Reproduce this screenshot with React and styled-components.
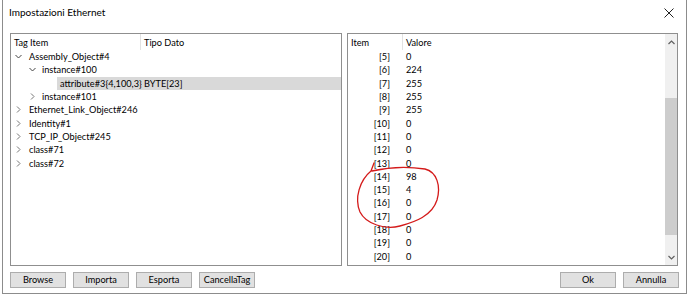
import React from 'react'
import styled, { createGlobalStyle } from 'styled-components';

const GlobalStyle = createGlobalStyle`
  body {
    margin: 0;
    background: #ffffff;
    font-family: Lato, "Open Sans", sans-serif;
    color: #000;
  }
`

const tree = [
  { name: 'Assembly_Object#4', level: 0, open: true },
  { name: 'instance#100', level: 1, open: true },
  { name: 'attribute#3{4,100,3}', level: 2, type: 'BYTE[23]', selected: true },
  { name: 'instance#101', level: 1, open: false },
  { name: 'Ethernet_Link_Object#246', level: 0, open: false },
  { name: 'Identity#1', level: 0, open: false },
  { name: 'TCP_IP_Object#245', level: 0, open: false },
  { name: 'class#71', level: 0, open: false },
  { name: 'class#72', level: 0, open: false },
];

const values = [0, 224, 255, 255, 255, 0, 0, 0, 0, 98, 4, 0, 0, 0, 0, 0, 0];

const Chevron = ({ open }) => (
  <svg width="7" height="7" viewBox="0 0 7 7">
    {open
      ? <polyline points="0.5,2 3.5,5 6.5,2" fill="none" stroke="#444" strokeWidth="1" />
      : <polyline points="2,0.5 5,3.5 2,6.5" fill="none" stroke="#777" strokeWidth="1" />}
  </svg>
);

export default function App() {
  return (
    <>
      <GlobalStyle />
      <Window>
        <TitleBar>
          <Title>Impostazioni Ethernet</Title>
          <Close>
            <svg width="10" height="10" viewBox="0 0 10 10">
              <path d="M0.5 0.5 L9.5 9.5 M9.5 0.5 L0.5 9.5" stroke="#222" strokeWidth="1" />
            </svg>
          </Close>
        </TitleBar>
        <Body>
          <Panels>
            <Panel $width={332}>
              <Header>
                <HeadCell $width={130}>Tag Item</HeadCell>
                <HeadCell>Tipo Dato</HeadCell>
              </Header>
              {tree.map((node) => (
                <TreeRow key={node.name} $level={node.level}>
                  <Toggle $level={node.level}>
                    {node.level < 2 && <Chevron open={node.open} />}
                  </Toggle>
                  <NodeLabel $selected={node.selected} $level={node.level}>
                    <NameText $level={node.level}>{node.name}</NameText>
                    {node.type && <TypeText>{node.type}</TypeText>}
                  </NodeLabel>
                </TreeRow>
              ))}
            </Panel>
            <Panel $width={331}>
              <Header>
                <HeadCell $width={55}>Item</HeadCell>
                <HeadCell>Valore</HeadCell>
              </Header>
              <List>
                {values.map((v, i) => (
                  <ValueRow key={i}>
                    <IndexCell>[{i + 5}]</IndexCell>
                    <ValueCell>{v}</ValueCell>
                  </ValueRow>
                ))}
              </List>
              <ScrollBar>
                <Arrow>
                  <svg width="7" height="5" viewBox="0 0 7 5">
                    <polyline points="0.5,4 3.5,1 6.5,4" fill="none" stroke="#606060" strokeWidth="1.2" />
                  </svg>
                </Arrow>
                <Track>
                  <Thumb />
                </Track>
                <Arrow>
                  <svg width="7" height="5" viewBox="0 0 7 5">
                    <polyline points="0.5,1 3.5,4 6.5,1" fill="none" stroke="#606060" strokeWidth="1.2" />
                  </svg>
                </Arrow>
              </ScrollBar>
              <Mark width="120" height="120" viewBox="0 0 120 120">
                <path
                  d="M27 128 L24 136 C13 145, 7 163, 13 177 C19 189, 38 195, 53 191 C68 187, 85 181, 90 165 C94 151, 90 137, 78 134 C58 131, 38 133, 25 136"
                  transform="translate(-1 -99)"
                  fill="none"
                  stroke="#d41a1a"
                  strokeWidth="1.3"
                  strokeLinecap="round"
                />
              </Mark>
            </Panel>
          </Panels>
          <Footer>
            <ButtonGroup>
              <Button>Browse</Button>
              <Button>Importa</Button>
              <Button>Esporta</Button>
              <Button>CancellaTag</Button>
            </ButtonGroup>
            <ButtonGroup>
              <Button>Ok</Button>
              <Button>Annulla</Button>
            </ButtonGroup>
          </Footer>
        </Body>
      </Window>
    </>
  )
}

const Window = styled.div`
  margin-left: 2px;
  width: 683px;
  height: 293px;
  border: 1px solid #8c8c8c;
  border-top: none;
  background: #ffffff;
  display: flex;
  flex-direction: column;
`

const TitleBar = styled.div`
  height: 27px;
  display: flex;
  align-items: center;
  justify-content: space-between;
  padding: 0 12px 0 6px;
`

const Title = styled.div`
  font-size: 10px;
  margin-top: -3px;
`

const Close = styled.div`
  display: flex;
  margin-top: -2px;
`

const Body = styled.div`
  padding: 6px 7px 0 7px;
  display: flex;
  flex-direction: column;
`

const Panels = styled.div`
  display: flex;
  gap: 5px;
`

const Panel = styled.div`
  position: relative;
  width: ${p => p.$width}px;
  height: 233px;
  box-sizing: border-box;
  border: 1px solid #8f8f8f;
  background: #fff;
  overflow: hidden;
`

const Header = styled.div`
  height: 16px;
  display: flex;
  font-size: 9.2px;
`

const HeadCell = styled.div`
  width: ${p => (p.$width ? `${p.$width}px` : 'auto')};
  box-sizing: border-box;
  padding: 1px 3px 0 3px;
  line-height: 15px;
  border-right: ${p => (p.$width ? '1px solid #e2e2e2' : 'none')};
`

const TreeRow = styled.div`
  height: 13.3px;
  display: flex;
  align-items: center;
  font-size: 9.2px;
  padding-left: ${p => 3 + p.$level * 13}px;
`

const Toggle = styled.div`
  width: 15px;
  display: flex;
  justify-content: flex-start;
  padding-left: ${p => (p.$level === 1 ? 2 : 1)}px;
  box-sizing: border-box;
`

const NodeLabel = styled.div`
  flex: 1;
  display: flex;
  height: 100%;
  align-items: center;
  margin-left: ${p => (p.$level === 2 ? 2 : 0)}px;
  padding-left: ${p => (p.$level === 2 ? 3 : 0)}px;
  background: ${p => (p.$selected ? '#d9d9d9' : 'transparent')};
`

const NameText = styled.span`
  white-space: nowrap;
  flex-shrink: 0;
  width: ${p => (p.$level === 2 ? '84px' : 'auto')};
`

const TypeText = styled.span`
  white-space: nowrap;
`

const List = styled.div`
  font-size: 9.2px;
`

const ValueRow = styled.div`
  height: 13.3px;
  display: flex;
  align-items: center;
`

const IndexCell = styled.div`
  width: 42px;
  text-align: right;
`

const ValueCell = styled.div`
  padding-left: 16px;
`

const ScrollBar = styled.div`
  position: absolute;
  top: 0;
  right: 0;
  bottom: 0;
  width: 12px;
  background: #f0f0f0;
  display: flex;
  flex-direction: column;
`

const Arrow = styled.div`
  height: 16px;
  display: flex;
  align-items: center;
  justify-content: center;
`

const Track = styled.div`
  flex: 1;
  padding-top: 48px;
  padding-bottom: 14px;
  display: flex;
  flex-direction: column;
`

const Thumb = styled.div`
  flex: 1;
  background: #cdcdcd;
`

const Mark = styled.svg`
  position: absolute;
  left: 0;
  top: 100px;
  overflow: visible;
  pointer-events: none;
`

const Footer = styled.div`
  display: flex;
  justify-content: space-between;
  margin-top: 6px;
`

const ButtonGroup = styled.div`
  display: flex;
  gap: 7px;
`

const Button = styled.button`
  width: 56px;
  height: 16px;
  padding: 0;
  background: #e1e1e1;
  border: 1px solid #adadad;
  font-family: Lato, "Open Sans", sans-serif;
  font-size: 9.2px;
  color: #000;
  line-height: 14px;
`
